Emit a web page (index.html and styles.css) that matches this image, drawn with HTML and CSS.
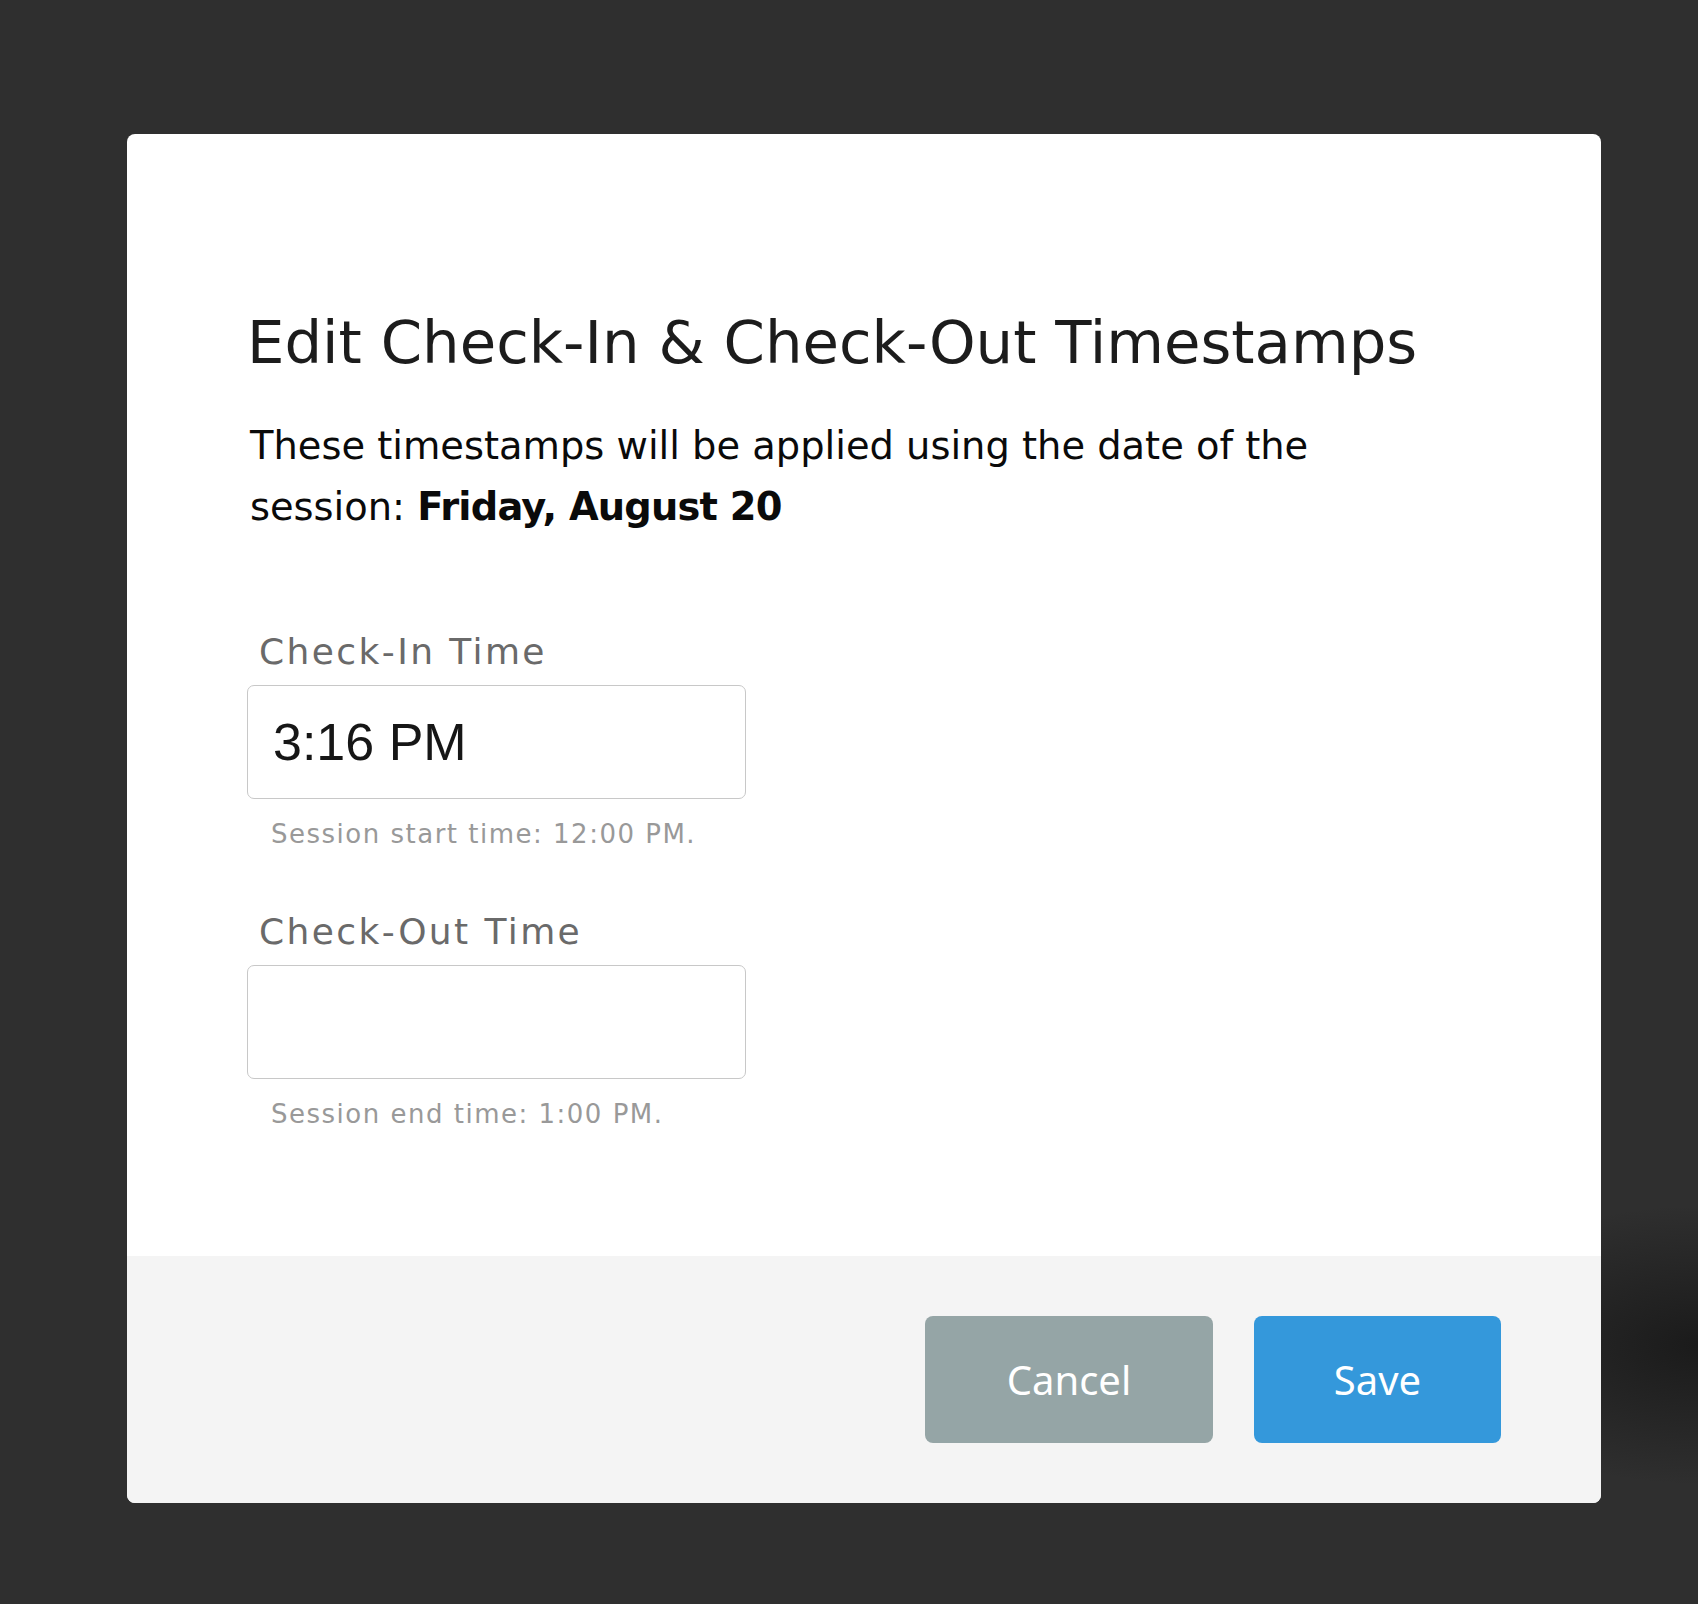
FILE: index.html
```html
<!DOCTYPE html>
<html lang="en">
<head>
<meta charset="utf-8">
<title>Edit Check-In &amp; Check-Out Timestamps</title>
<link rel="stylesheet" href="styles.css">
</head>
<body>
<div class="backdrop">
  <div class="modal">
    <div class="modal-body">
      <h1 class="title">Edit Check-In &amp; Check-Out Timestamps</h1>
      <p class="intro">These timestamps will be applied using the date of the<br>session: <strong>Friday, August 20</strong></p>
      <div class="field">
        <label class="label" for="checkin">Check-In Time</label>
        <input class="input" id="checkin" type="text" value="3:16 PM">
        <div class="help">Session start time: 12:00 PM.</div>
      </div>
      <div class="field">
        <label class="label" for="checkout">Check-Out Time</label>
        <input class="input" id="checkout" type="text" value="">
        <div class="help">Session end time: 1:00 PM.</div>
      </div>
    </div>
    <div class="modal-footer">
      <button class="btn btn-cancel" type="button">Cancel</button>
      <button class="btn btn-save" type="button">Save</button>
    </div>
  </div>
</div>
</body>
</html>
```
FILE: styles.css
```css
html, body {
  margin: 0;
  padding: 0;
}
body {
  width: 1698px;
  height: 1604px;
  overflow: hidden;
  background: #2f2f2f;
  font-family: "DejaVu Sans", "Liberation Sans", sans-serif;
}
.backdrop {
  width: 1698px;
  height: 1604px;
  padding: 134px 0 0 127px;
  box-sizing: border-box;
  background:
    radial-gradient(ellipse 260px 140px at 1698px 1345px, rgba(20,20,20,0.75), rgba(20,20,20,0) 100%),
    #2f2f2f;
}
.modal {
  width: 1474px;
  height: 1369px;
  background: #ffffff;
  border-radius: 8px;
  overflow: hidden;
  display: flex;
  flex-direction: column;
}
.modal-body {
  flex: 1;
  padding: 173px 120px 0 120px;
}
.title {
  margin: 0;
  font-size: 59.3px;
  line-height: 72px;
  font-weight: normal;
  color: #1c1c1c;
}
.intro {
  margin: 36px 0 0 0;
  padding-left: 3px;
  font-size: 38.4px;
  line-height: 61px;
  color: #0a0a0a;
}
.intro strong {
  font-weight: bold;
  letter-spacing: -0.8px;
}
.field {
  display: flex;
  flex-direction: column;
  align-items: flex-start;
  margin-top: 95px;
}
.field + .field {
  margin-top: 63px;
}
.label {
  padding-left: 12px;
  font-size: 36px;
  line-height: 40px;
  letter-spacing: 2.4px;
  color: #6a6a6a;
}
.input {
  margin-top: 13px;
  width: 499px;
  height: 114px;
  box-sizing: border-box;
  border: 1px solid #c8c8c8;
  border-radius: 7px;
  padding: 0 25px;
  font-family: "Liberation Sans", Arial, sans-serif;
  font-size: 52px;
  color: #161616;
  background: #ffffff;
  outline: none;
}
.help {
  margin-top: 20px;
  padding-left: 24px;
  font-size: 26px;
  line-height: 30px;
  letter-spacing: 1.5px;
  color: #999999;
}
.modal-footer {
  height: 247px;
  box-sizing: border-box;
  background: #f4f4f4;
  display: flex;
  justify-content: flex-end;
  align-items: center;
  gap: 41px;
  padding: 0 100px 0 0;
}
.btn {
  height: 127px;
  border: none;
  border-radius: 8px;
  color: #ffffff;
  font-family: "Noto Sans", "DejaVu Sans", sans-serif;
  font-size: 40px;
  display: flex;
  align-items: center;
  justify-content: center;
  padding: 0;
}
.btn-cancel {
  width: 288px;
  background: #95a5a6;
}
.btn-save {
  width: 247px;
  background: #3498db;
}
```
